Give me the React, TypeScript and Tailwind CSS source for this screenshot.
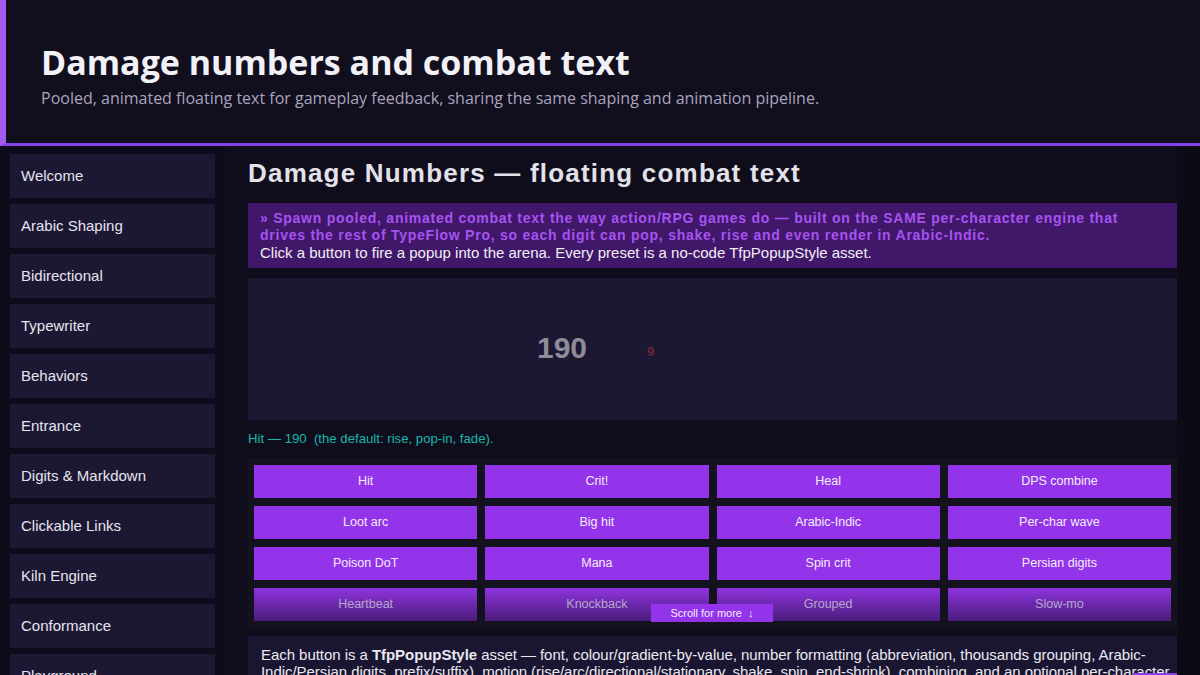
import React from "react";

const nav = [
  "Welcome",
  "Arabic Shaping",
  "Bidirectional",
  "Typewriter",
  "Behaviors",
  "Entrance",
  "Digits & Markdown",
  "Clickable Links",
  "Kiln Engine",
  "Conformance",
  "Playground",
];

const buttons = [
  "Hit",
  "Crit!",
  "Heal",
  "DPS combine",
  "Loot arc",
  "Big hit",
  "Arabic-Indic",
  "Per-char wave",
  "Poison DoT",
  "Mana",
  "Spin crit",
  "Persian digits",
];

const faded = ["Heartbeat", "Knockback", "Grouped", "Slow-mo"];

export default function App() {
  return (
    <div className="w-[1200px] h-[675px] overflow-hidden bg-[#0e0c1a] flex flex-col" style={{ fontFamily: '"Liberation Sans", Arial, sans-serif' }}>
      <header className="h-[146px] shrink-0 bg-[#110e1e] border-l-[6px] border-[#a259f0] border-b-[3px] border-b-[#8542ea] pl-[35px] pt-[40px]" style={{ fontFamily: '"Open Sans", "Noto Sans", sans-serif' }}>
        <h1 className="text-[34px] leading-[44px] font-bold text-[#f3f1f8]">Damage numbers and combat text</h1>
        <p className="text-[16px] leading-[24px] mt-[2px] text-[#aaa4bd]">
          Pooled, animated floating text for gameplay feedback, sharing the same shaping and animation pipeline.
        </p>
      </header>
      <div className="flex flex-1 min-h-0">
        <nav className="w-[225px] shrink-0 pl-[10px] pt-[8px] flex flex-col gap-[6px]">
          {nav.map((n) => (
            <div key={n} className="w-[205px] h-[44px] shrink-0 bg-[#1c1834] text-[#e6e4ee] text-[15px] flex items-center pl-[11px]">
              {n}
            </div>
          ))}
        </nav>
        <main className="w-[952px] shrink-0 bg-[#0f0d1b] pl-[23px] pt-[11px] flex flex-col">
          <h2 className="shrink-0 text-[26px] leading-[32px] font-bold tracking-[1.2px] text-[#e3e1ea]">Damage Numbers — floating combat text</h2>
          <div className="shrink-0 mt-[14px] w-[929px] bg-[#41176a] pl-[12px] pr-[40px] pt-[7px] pb-[7px]">
            <p className="text-[14px] leading-[17px] font-bold tracking-[0.75px] text-[#a653f0]">
              » Spawn pooled, animated combat text the way action/RPG games do — built on the SAME per-character engine that drives the rest of TypeFlow Pro, so each digit can pop, shake, rise and even render in Arabic-Indic.
            </p>
            <p className="text-[15px] leading-[17px] text-[#f1eff6]">
              Click a button to fire a popup into the arena. Every preset is a no-code TfpPopupStyle asset.
            </p>
          </div>
          <div className="mt-[10px] w-[929px] h-[142px] bg-[#1c1733] relative shrink-0">
            <span className="absolute left-[289px] top-[52px] text-[30px] leading-[36px] font-bold text-[#8f8b99]">190</span>
            <span className="absolute left-[399px] top-[64px] text-[13px] font-bold text-[#6a2437]">9</span>
          </div>
          <div className="shrink-0 h-[38px] flex items-center text-[13.2px] text-[#17b7ac]">
            Hit — 190&nbsp;&nbsp;(the default: rise, pop-in, fade).
          </div>
          <div className="w-[929px] h-[170px] bg-[#15121f] px-[6px] pt-[7px] relative shrink-0">
            <div className="grid grid-cols-4 gap-x-[8px] gap-y-[8px]">
              {buttons.map((b) => (
                <div key={b} className="h-[33px] bg-[#9333ea] text-[#f4eefc] text-[12.5px] flex items-center justify-center">
                  {b}
                </div>
              ))}
              {faded.map((b) => (
                <div key={b} className="h-[33px] bg-gradient-to-b from-[#8f34e0] to-[#4b1c7c] text-[#b7a8c9] text-[12.5px] flex items-center justify-center">
                  {b}
                </div>
              ))}
            </div>
            <div className="absolute left-[403px] top-[146px] w-[122px] h-[18px] bg-[#9333ea] text-[#f4eefc] text-[11px] flex items-center justify-center">
              Scroll for more&nbsp;&nbsp;↓
            </div>
          </div>
          <div className="shrink-0 mt-[8px] w-[929px] bg-[#1a1631] pl-[13px] pr-0 pt-[10px] pb-[10px] text-[15px] leading-[17px] tracking-[-0.05px] text-[#ebe9f2] relative">
            Each button is a <b>TfpPopupStyle</b> asset — font, colour/gradient-by-value, number formatting (abbreviation, thousands grouping, Arabic-Indic/Persian digits, prefix/suffix), motion (rise/arc/directional/stationary, shake, spin, end-shrink), combining, and an optional per-character wave.
            <div className="absolute right-0 top-[37px] w-[44px] h-[4px] bg-[#8b3ee8]" />
          </div>
        </main>
        <div className="flex-1 bg-[#0c0b15]" />
      </div>
    </div>
  );
}
